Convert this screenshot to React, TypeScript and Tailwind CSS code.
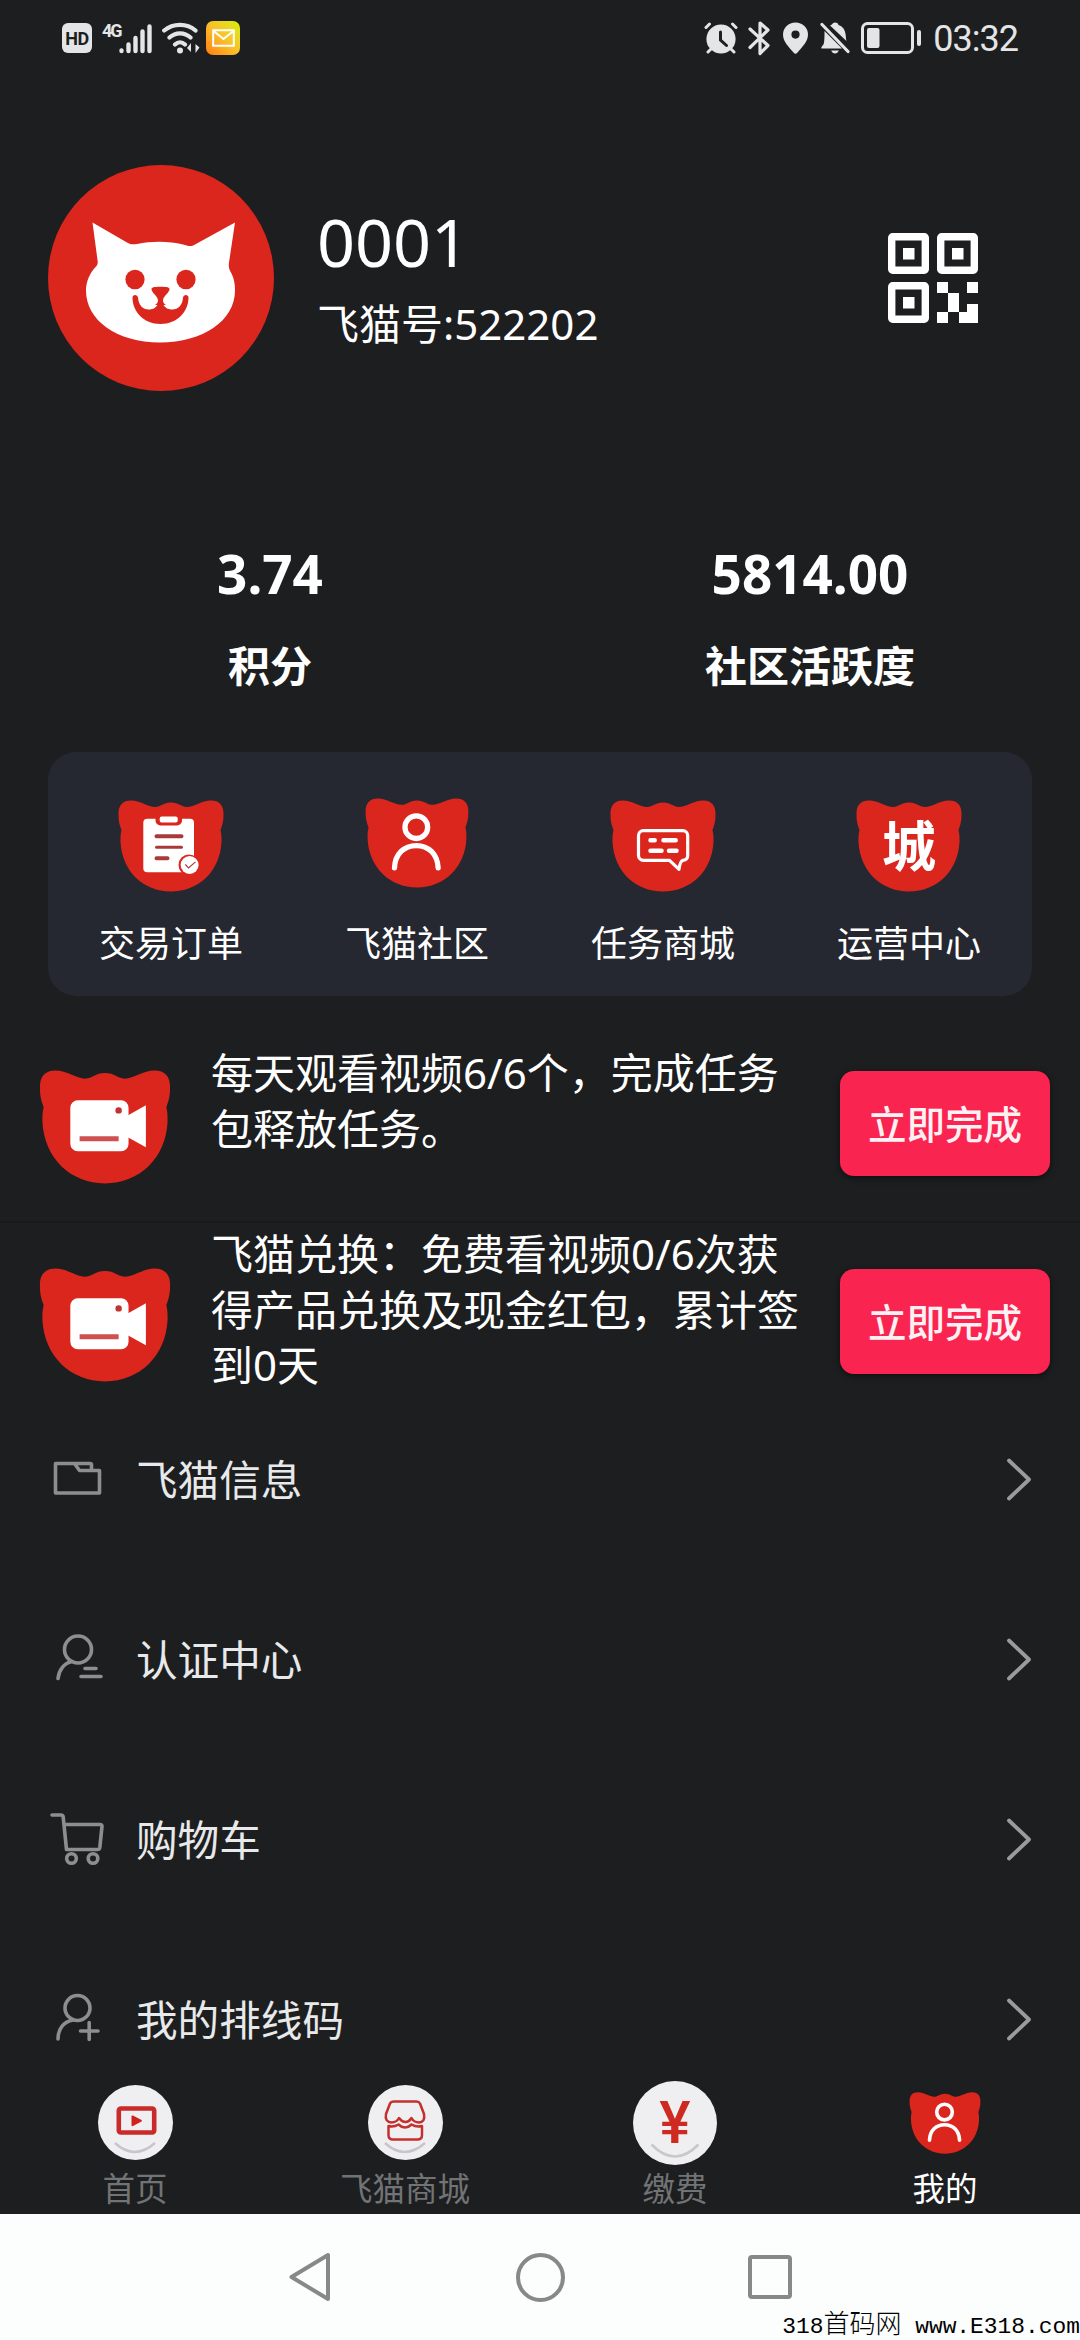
import type { ReactNode } from "react";

type BadgeProps = {
  className: string;
  children: ReactNode;
};

// red cat head used behind most of the icons
function CatBadge({ className, children }: BadgeProps) {
  return (
    <svg className={className} viewBox="0 0 106 92" fill="none">
      <path
        d="M.5 15C0 5 5 .5 13 .5c9 0 17 6.5 24 6.5 6 0 8-4.5 16-4.5S63 7 69 7C76 7 84 .5 93 .5c8 0 13 4.500 12.500 14.500 0 7-1.500 11-3 15 1.200 5 1 8 1 12C102 71 81 91.500 53 91.500S4 71 2.500 42c0-4-.2-7 1-12C2 26 .5 22 .5 15Z"
        fill="#db261e"
      />
      {children}
    </svg>
  );
}

function Clipboard() {
  return (
    <>
      <rect x="25.300" y="18.700" width="50.700" height="53.500" rx="4" fill="#fff" />
      <rect x="37.500" y="12" width="26.500" height="13.500" rx="5" fill="#db261e" />
      <rect x="41.700" y="16.500" width="18" height="6" rx="2" fill="#fff" />
      <g stroke="#a83a3a" strokeLinecap="round">
        <path d="M38.500 36.300h25M38.500 58.300h11" strokeWidth="4" />
        <path d="M38.500 47.200h25" strokeWidth="3" />
      </g>
      <circle cx="71" cy="65" r="10.500" fill="#db261e" />
      <circle cx="71.600" cy="65" r="9" fill="#fff" />
      <path d="m67.300 64.300 3.200 3.600 7-6" stroke="#a83a3a" strokeWidth="1.200" />
    </>
  );
}

function Person() {
  return (
    <g stroke="#fff" strokeWidth="5.400" strokeLinecap="round">
      <circle cx="52.300" cy="29.800" r="11.600" />
      <path d="M30 71.500C30.500 57 40 48.600 52.300 48.600S74 57 74.600 71.500" />
    </g>
  );
}

function Message() {
  return (
    <g stroke="#fff" strokeLinejoin="round" strokeLinecap="round">
      <path
        d="M33 30.700h39.700a5 5 0 0 1 5 5v20c0 3-2 4.300-4.700 4.600-3 1-3.400 5-4 9l-9.500-9H33.500a5 5 0 0 1-5-5V35.700a5 5 0 0 1 4.500-5Z"
        strokeWidth="3.200"
      />
      <path d="M40.500 40.300h4.200M53.500 40.300h12.200M40.500 50.800h11M59 50.800h7.500" strokeWidth="4.500" />
    </g>
  );
}

function City() {
  return (
    <text x="53" y="66.500" textAnchor="middle" fontSize="54" fontWeight="700" fill="#fff">
      城
    </text>
  );
}

function Camera() {
  return (
    <>
      <rect x="25" y="24.500" width="47" height="41" rx="6" fill="#fff" />
      <path d="M71 37 86 28.500V62.400L71 54Z" fill="#fff" />
      <circle cx="64" cy="32.600" r="2.600" fill="#c23232" />
      <path d="M32.500 55.500h31.500" stroke="#cf5050" strokeWidth="4" />
    </>
  );
}

function Avatar() {
  return (
    <svg className="size-[226px]" viewBox="0 0 226 226">
      <circle cx="113" cy="113" r="113" fill="#db261e" />
      <path
        d="M44.500 57.500 79 77.500C82 79.500 85 79.500 89 79c15-3 32-3 46 .5 5 1.500 8 2.500 12 0L187 57.500l-6 40c-.8 5 .5 7.500 2.500 11 2.500 5 3.500 10 3.500 17 0 30-32 52-75 52s-74-22-74-52c0-9 4-18 10.500-24.500 1.500-2 1.300-4 1-6Z"
        fill="#fff"
      />
      <g fill="#db261e">
        <ellipse cx="87" cy="114.500" rx="9.600" ry="9.800" />
        <ellipse cx="138" cy="114.500" rx="9.600" ry="9.800" />
        <path d="M103.500 124c0-1.500 2-2.300 9-2.300s9 .8 9 2.300c0 4-6.500 7-6.500 11.500 0 2 1.500 3.500 3 4.500h-11c1.500-1 3-2.500 3-4.500 0-4.500-6.500-7.500-6.500-11.500Z" />
        <path d="M84.500 132.500c0-3.500 5-3.500 5.500 0 .6 8 5 12 10.500 12 5 0 8-2 10-6.500h4c2 4.500 5 6.500 10 6.500 5.500 0 10-4 10.500-12 .5-3.500 5.500-3.500 5.500 0 0 14-11 26.500-28 26.500s-28-12.500-28-26.500Z" />
      </g>
    </svg>
  );
}

function QrCode() {
  return (
    <svg className="size-[90px]" viewBox="0 0 90 90" fill="none">
      <g stroke="#fff" strokeWidth="7.400">
        <rect x="3.700" y="3.700" width="33.600" height="33.600" rx="1" />
        <rect x="52.700" y="3.700" width="33.600" height="33.600" rx="1" />
        <rect x="3.700" y="52.700" width="33.600" height="33.600" rx="1" />
      </g>
      <path
        d="M15 15h11.500v11.500H15zM64 15h11.500v11.500H64zM15 64h11.500v11.500H15zM49 49h11v11H49zM79 49h11v11H79zM60 60h11v19H60zM49 79h11v11H49zM79 71h11v19H71V79h8z"
        fill="#fff"
      />
    </svg>
  );
}

function StatusBar() {
  return (
    <div className="flex h-[76px] items-center justify-between pr-[62px] pl-[62px] text-[#e4e5e7]">
      <div className="flex items-center">
        <span className="flex h-[30px] w-[30px] items-center justify-center rounded-[6px] bg-[#e4e5e7] font-[Roboto] text-[18px] font-bold tracking-[-0.5px] text-[#1d1e20]">
          HD
        </span>
        <span className="ml-[10px] h-[30px] w-[18px] font-[Roboto] text-[18px] leading-[15px] font-bold tracking-[-2px]">
          4G
        </span>
        <svg className="-ml-px h-[32px] w-[33px]" viewBox="0 0 33 32" stroke="currentColor" strokeWidth="4.400" strokeLinecap="round">
          <path d="M2.500 28.500v.5M9.500 22.500V29M16.500 16v13M23.500 9.500V29M30.500 4.500V29" />
        </svg>
        <svg className="ml-[10px] h-[32px] w-[38px]" viewBox="0 0 38 32" fill="none" stroke="currentColor" strokeWidth="4.200" strokeLinecap="round">
          <path d="M2.200 8.500C11 1 25 1 33.500 8.500M7.500 15.500c6-5.500 15-5.500 21 0M13 22.500c3-3 7-3 10 0" />
          <circle cx="18" cy="28.500" r="3" fill="currentColor" stroke="none" />
          <path d="m25 26 4-5v9M33.500 22v9l4-5.500Z" fill="currentColor" stroke="none" />
        </svg>
        <span className="ml-[6px] flex size-[34px] items-center justify-center rounded-[7px] bg-linear-to-tr from-[#ff7a10] via-[#f9c02a] to-[#d5f000]">
          <svg className="h-[18px] w-[23px]" viewBox="0 0 23 18" fill="none" stroke="#fff" strokeWidth="2">
            <path d="M1.200 1.200h20.600v15.600H1.200zM1.500 2l10 8 10-8" />
          </svg>
        </span>
      </div>
      <div className="flex items-center">
        <svg className="h-[32px] w-[34px]" viewBox="0 0 34 32" fill="none" stroke="currentColor" strokeLinecap="round">
          <circle cx="17" cy="17" r="14.600" fill="currentColor" stroke="none" />
          <path d="M2 5.500 5.500 2M32 5.500 28.500 2M4 30l3-3M30 30l-3-3" strokeWidth="3" />
          <path d="M16.500 10v8l6 5.500" stroke="#1d1e20" strokeWidth="3" />
        </svg>
        <svg className="ml-[10px] h-[36px] w-[23px]" viewBox="0 0 23 36" fill="none" stroke="currentColor" strokeWidth="3.200" strokeLinecap="round" strokeLinejoin="round">
          <path d="m2 9 18 16.500-8 8V3l8 7L2 27.500" />
        </svg>
        <svg className="ml-[12px] h-[32px] w-[25px]" viewBox="0 0 25 32" fill="currentColor">
          <path fillRule="evenodd" d="M12.500.5C5.500.5 0 5.500 0 12.500 0 20 6 25 10.500 30.500q2 2.500 4 0C19 25 25 20 25 12.500 25 5.500 19.500.5 12.500.5Zm0 8a4 4 0 1 1 0 8.200 4 4 0 0 1 0-8.200Z" />
        </svg>
        <svg className="ml-[12px] h-[32px] w-[30px]" viewBox="0 0 30 32" fill="currentColor">
          <path d="M15 .5c2 0 3 .8 3.500 2.500 5 1.500 7.500 6 7.500 14l.5 2L10 3.500q1.500-.5 2-1.200Q13 .5 15 .5ZM4.500 9 22 26.500H1.500c-1-1 1-2.500 2-4 1-3 1-8 1-13.500ZM11 28.500h8q-1.500 3-4 3t-4-3Z" />
          <path d="m2 2.500 26 27" stroke="currentColor" strokeWidth="3.200" strokeLinecap="round" />
        </svg>
        <svg className="ml-[11px] h-[32px] w-[61px]" viewBox="0 0 61 32" fill="none">
          <rect x="1.500" y="1.500" width="50" height="29" rx="5" stroke="currentColor" strokeWidth="3" />
          <rect x="6" y="6" width="12.500" height="20" rx="2" fill="currentColor" />
          <rect x="56" y="8" width="4" height="16" rx="2" fill="currentColor" />
        </svg>
        <span className="ml-[11px] pt-[2px] font-[Roboto] text-[36px] leading-none tracking-[-1px]">03:32</span>
      </div>
    </div>
  );
}

const shortcuts = [
  { label: "交易订单", icon: <Clipboard />, size: "mb-[25px] h-[92px] w-[106px]" },
  { label: "飞猫社区", icon: <Person />, size: "-mt-[2px] mb-[29px] h-[90px] w-[104px]" },
  { label: "任务商城", icon: <Message />, size: "mb-[25px] h-[92px] w-[106px]" },
  { label: "运营中心", icon: <City />, size: "mb-[25px] h-[92px] w-[106px]" },
];

const menu = [
  {
    label: "飞猫信息",
    icon: <path d="M5.500 10.500h19l5 7h20V40h-44zM25 10.500h15q1.500 0 1.500 1.500v5" />,
  },
  {
    label: "认证中心",
    icon: (
      <>
        <circle cx="28" cy="16.500" r="13.500" />
        <path d="M8 45.500C9 37 14 30 22 28.500M35 35.500h11M31 43.500h20" />
      </>
    ),
  },
  {
    label: "购物车",
    icon: (
      <>
        <path d="M2 2h9q2 0 2.200 2L16.500 36.500h31q2 0 2.300-2L52 13.500q.2-2-2-2H14.500" />
        <circle cx="21.500" cy="45.500" r="4.800" />
        <circle cx="43" cy="45.500" r="4.800" />
      </>
    ),
  },
  {
    label: "我的排线码",
    icon: (
      <>
        <circle cx="27.500" cy="15" r="12.500" />
        <path d="M8 46C8 35.500 14 28.500 23 27M30.500 38H48M39.200 29.500v17" />
      </>
    ),
  },
];

function Smile() {
  return <path d="M17 58q19.500 18 40 0" stroke="#c8c4ca" strokeWidth="2.400" />;
}

const tabs = [
  {
    label: "首页",
    icon: (
      <svg className="size-[75px] rounded-full bg-[#efeff2]" viewBox="0 0 75 75" fill="none">
        <rect x="20.800" y="23.500" width="35.400" height="24" rx="2" stroke="#c92b2a" strokeWidth="4.600" />
        <path d="M33.500 31.500q0-1.500 1.500-1l8.500 4.500q1 .8 0 1.600L35 41q-1.500.5-1.500-1Z" fill="#d2211d" />
        <Smile />
      </svg>
    ),
  },
  {
    label: "飞猫商城",
    icon: (
      <svg className="size-[75px] rounded-full bg-[#efeff2]" viewBox="0 0 75 75" fill="none">
        <g stroke="#c4302d" strokeWidth="2.500" strokeLinejoin="round">
          <path d="M26 16.500h22.500q2.500 0 3.500 2l4 10.500q1.500 8-5 8.500-5 0-7.500-4.500-2.500 4-6 4t-6.500-4q-2.500 4.500-7.500 4.500-7-.5-5.500-8.500l4-10.500q1-2 4-2Z" />
          <path d="M20.500 41q5 1.500 10-1.500 3 3 6.500 3t6.500-3q5 3 10.500 1.500v9q0 4.500-4.500 4.500H25q-4.500 0-4.500-4.500Z" />
        </g>
        <Smile />
      </svg>
    ),
  },
  {
    label: "缴费",
    icon: (
      <svg className="size-[84px] rounded-full bg-[#efeff2]" viewBox="0 0 84 84" fill="none">
        <text
          x="42"
          y="62"
          textAnchor="middle"
          fontFamily="Roboto"
          fontSize="59"
          fontWeight="500"
          fill="#cf2a22"
        >
          ¥
        </text>
        <path d="M18.500 63.500q23.500 24 47 0" stroke="#c6c8c9" strokeWidth="2.600" />
      </svg>
    ),
  },
  {
    label: "我的",
    icon: (
      <CatBadge className="h-[62px] w-[72px]">
        <Person />
      </CatBadge>
    ),
    active: true,
  },
];

function Task({ className, children }: BadgeProps) {
  return (
    <div className={`flex items-start pr-[30px] pl-[39px] ${className}`}>
      <CatBadge className="mt-[45px] h-[114px] w-[132px]">
        <Camera />
      </CatBadge>
      {children}
      <button className="mt-[46px] ml-auto h-[105px] w-[210px] rounded-[14px] bg-[#f92450] pt-[2px] text-[38.500px] font-medium text-[#fff0f3] shadow-[0_2px_6px_rgba(0,0,0,0.5)]">
        立即完成
      </button>
    </div>
  );
}

export default function App() {
  return (
    <div className="flex h-[2340px] w-[1080px] flex-col overflow-hidden bg-[#1d1e20] font-['Noto_Sans','Noto_Sans_CJK_SC',sans-serif] text-white">
      <StatusBar />

      <section className="flex h-[403px] items-center pr-[102px] pl-[48px]">
        <Avatar />
        <div className="ml-[43px] flex flex-col pt-[8px]">
          <h1 className="text-[66.500px] leading-[84px]">0001</h1>
          <p className="text-[42px] leading-[82px]">飞猫号:522202</p>
        </div>
        <div className="ml-auto">
          <QrCode />
        </div>
      </section>

      <section className="grid h-[273px] grid-cols-2 pt-[50px] text-center font-bold">
        <div>
          <p className="text-[53px] leading-[90px]">3.74</p>
          <p className="text-[42px] leading-[94px]">积分</p>
        </div>
        <div>
          <p className="text-[53px] leading-[90px]">5814.00</p>
          <p className="text-[42px] leading-[94px]">社区活跃度</p>
        </div>
      </section>

      <section className="mx-[48px] grid h-[244px] grid-cols-4 rounded-[28px] bg-[#252830]">
        {shortcuts.map((item) => (
          <div key={item.label} className="flex flex-col items-center pt-[48px]">
            <CatBadge className={item.size}>{item.icon}</CatBadge>
            <span className="text-[36px] leading-[54px]">{item.label}</span>
          </div>
        ))}
      </section>

      <section className="mt-[29px] text-[42px] leading-[55.500px]">
        <Task className="h-[198px] border-b-2 border-[#18191b]">
          <p className="mt-[20px] ml-[40px] whitespace-nowrap">
            每天观看视频6/6个，完成任务
            <br />
            包释放任务。
          </p>
        </Task>
        <Task className="h-[167px]">
          <p className="mt-[3px] ml-[40px] whitespace-nowrap">
            飞猫兑换：免费看视频0/6次获
            <br />
            得产品兑换及现金红包，累计签
            <br />
            到0天
          </p>
        </Task>
      </section>

      <ul className="h-[680px] overflow-hidden text-[#e8e9ea]">
        {menu.map((item) => (
          <li key={item.label} className="flex h-[180px] items-center pr-[48px] pl-[50px]">
            <svg className="h-[54px] w-[54px] text-[#8d8e90]" viewBox="0 0 54 54" fill="none" stroke="currentColor" strokeWidth="3.600" strokeLinecap="round" strokeLinejoin="round">
              {item.icon}
            </svg>
            <span className="ml-[32px] pt-[2px] text-[41.600px] leading-none">{item.label}</span>
            <svg className="ml-auto h-[44px] w-[26px]" viewBox="0 0 26 44" fill="none" stroke="#9a9b9d" strokeWidth="3.800" strokeLinecap="round" strokeLinejoin="round">
              <path d="M3 2.500 23 21.500 3 40.500" />
            </svg>
          </li>
        ))}
      </ul>

      <nav className="grid h-[144px] grid-cols-4">
        {tabs.map((tab) => (
          <div key={tab.label} className="flex flex-col items-center">
            <div className="flex h-[105px] items-center">{tab.icon}</div>
            <span className={`text-[32.500px] leading-[28px] ${tab.active ? "text-white" : "text-[#727375]"}`}>
              {tab.label}
            </span>
          </div>
        ))}
      </nav>

      <footer className="relative h-[126px] bg-[#fcfdfd]">
        <div className="flex h-[126px] items-center justify-center gap-[183px]">
          <svg className="h-[50px] w-[44px]" viewBox="0 0 44 50" fill="none" stroke="#888" strokeWidth="4" strokeLinejoin="round">
            <path d="M2.500 25 39 3v44Z" />
          </svg>
          <span className="size-[49px] rounded-full border-4 border-[#888]" />
          <span className="size-[44px] rounded-[4px] border-4 border-[#888]" />
        </div>
        <p className="absolute right-0 bottom-0 font-['Liberation_Mono','Noto_Sans_CJK_SC',monospace] text-[22.900px] leading-[26px] whitespace-pre text-black">
          318<span className="text-[26px] leading-none font-light">首码网</span> www.E318.com
        </p>
      </footer>
    </div>
  );
}
